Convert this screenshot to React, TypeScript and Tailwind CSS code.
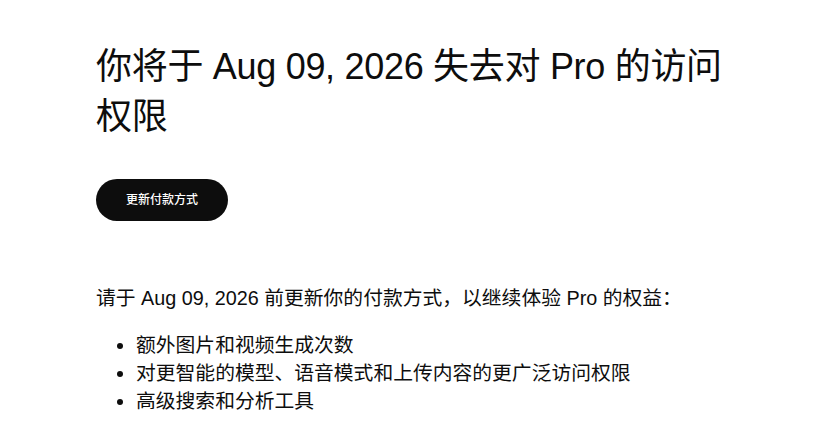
export default function App() {
  return (
    <main
      className="min-h-screen bg-white text-[#0d0d0d]"
      style={{ fontFamily: '"Liberation Sans", "Noto Sans CJK SC", sans-serif' }}
    >
      <div className="ml-[96px] w-[640px] pt-[42px]">
        <h1 className="text-[36px] leading-[50px] font-normal tracking-[-0.3px]">
          你将于 Aug 09, 2026 失去对 Pro 的访问权限
        </h1>
        <button className="mt-[37px] flex h-[42px] w-[132px] items-center justify-center rounded-full bg-[#0d0d0d] text-[12px] font-medium text-white">
          更新付款方式
        </button>
        <p className="mt-[63px] text-[19.8px] leading-[28px]">
          请于 Aug 09, 2026 前更新你的付款方式，以继续体验 Pro 的权益：
        </p>
        <ul className="mt-[19px] list-disc pl-[40px] text-[19.8px] leading-[28px]">
          <li>额外图片和视频生成次数</li>
          <li>对更智能的模型、语音模式和上传内容的更广泛访问权限</li>
          <li>高级搜索和分析工具</li>
        </ul>
      </div>
    </main>
  );
}
